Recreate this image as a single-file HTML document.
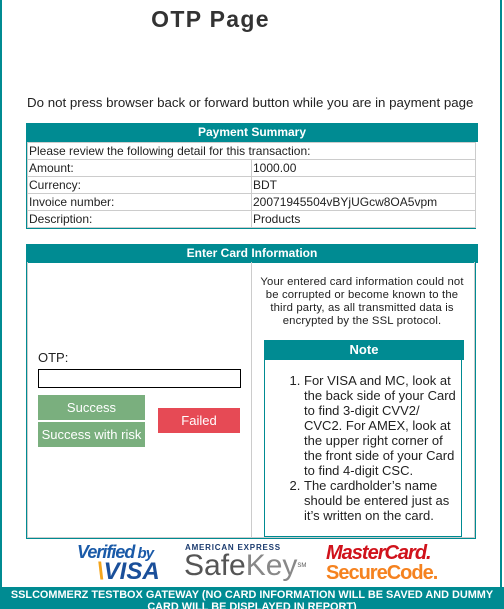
<!DOCTYPE html>
<html><head><style>
*{margin:0;padding:0;box-sizing:border-box}
body{width:504px;height:609px;overflow:hidden;background:#fff;font-family:"Liberation Sans",sans-serif;color:#222;position:relative}
.frame{position:absolute;left:0;top:0;width:502px;height:609px;border-left:2px solid #008b92;border-right:2px solid #008b92}
.abs{position:absolute}
h1{position:absolute;left:0;width:421px;top:6px;text-align:center;font-size:23px;font-weight:bold;color:#333;letter-spacing:1.3px}
.hd{position:absolute;background:#008b92;color:#fff;font-weight:bold;font-size:12px;text-align:center}
table{border-collapse:collapse;position:absolute;left:27px;top:142px;width:449px;font-size:12px}
td{border:1px solid #ccc;height:17px;padding:0 1px;line-height:15px}
.btn{position:absolute;color:#fff;font-size:13px;text-align:center}
</style></head><body>
<div class="frame"></div>
<h1>OTP Page</h1>
<div class="abs" style="left:27px;top:95px;font-size:13.3px">Do not press browser back or forward button while you are in payment page</div>
<div class="hd" style="left:26px;top:123px;width:452px;height:19px;line-height:18px">Payment Summary</div>
<div class="abs" style="left:26px;top:142px;width:450px;height:87px;border:1px solid #008b92"></div>
<table>
<tr><td colspan="2">Please review the following detail for this transaction:</td></tr>
<tr><td style="width:224px">Amount:</td><td>1000.00</td></tr>
<tr><td>Currency:</td><td>BDT</td></tr>
<tr><td>Invoice number:</td><td>20071945504vBYjUGcw8OA5vpm</td></tr>
<tr><td>Description:</td><td>Products</td></tr>
</table>
<div class="hd" style="left:26px;top:244px;width:452px;height:19px;line-height:18px">Enter Card Information</div>
<div class="abs" style="left:26px;top:262px;width:450px;height:277px;border:1px solid #008b92;border-top:none"></div>
<div class="abs" style="left:27px;top:262px;width:448px;height:276px;border:1px solid #ccc;border-top:none"></div>
<div class="abs" style="left:251px;top:262px;width:1px;height:276px;background:#ccc"></div>
<div class="abs" style="left:38px;top:350px;font-size:13px">OTP:</div>
<div class="abs" style="left:38px;top:369px;width:203px;height:19px;border:1px solid #000"></div>
<div class="btn" style="left:38px;top:395px;width:107px;height:25px;line-height:25px;background:#7aaf7e">Success</div>
<div class="btn" style="left:38px;top:422px;width:107px;height:25px;line-height:25px;background:#7aaf7e">Success with risk</div>
<div class="btn" style="left:158px;top:408px;width:82px;height:25px;line-height:25px;background:#e64a55">Failed</div>
<div class="abs" style="left:252px;top:276px;width:220px;text-align:center;font-size:11.3px;letter-spacing:.15px;line-height:13px;white-space:nowrap">Your entered card information could not<br>be corrupted or become known to the<br>third party, as all transmitted data is<br>encrypted by the SSL protocol.</div>
<div class="hd" style="left:264px;top:340px;width:200px;height:20px;line-height:20px;font-size:13px">Note</div>
<div class="abs" style="left:264px;top:359px;width:198px;height:178px;border:1px solid #008b92;border-top:none"></div>
<ol class="abs" style="left:304px;top:373px;width:152px;font-size:13px;line-height:15px;padding-left:0">
<li>For VISA and MC, look at the back side of your Card to find 3-digit CVV2/ CVC2. For AMEX, look at the upper right corner of the front side of your Card to find 4-digit CSC.</li>
<li>The cardholder’s name should be entered just as it’s written on the card.</li>
</ol>
<div class="abs" style="left:77px;top:543px;width:90px;font-style:italic;font-weight:bold;color:#1a5aa8;font-size:18px;letter-spacing:-1px;line-height:18px">Verified<span style="font-size:15px"> by</span></div>
<div class="abs" style="left:97px;top:560px;font-style:italic;font-weight:bold;color:#1a4f9a;font-size:24px;line-height:24px"><span style="color:#f4a51c">\</span>VISA</div>
<div class="abs" style="left:185px;top:543px;font-weight:bold;color:#1a3a6e;font-size:8px;letter-spacing:.8px">AMERICAN EXPRESS</div>
<div class="abs" style="left:184px;top:550px;color:#555;font-size:30px;line-height:32px">Safe<span style="color:#888">Key</span><span style="font-size:6px;vertical-align:top">SM</span></div>
<div class="abs" style="left:326px;top:543px;font-weight:bold;font-style:italic;color:#d0121b;font-size:20px;letter-spacing:-1px;line-height:21px">MasterCard.</div>
<div class="abs" style="left:326px;top:563px;font-weight:bold;color:#f5821f;font-size:20px;letter-spacing:-1px;line-height:21px">SecureCode.</div>
<div class="abs" style="left:0;top:587px;width:504px;height:22px;background:#008b92;color:#fff;font-weight:bold;font-size:10.9px;text-align:center;line-height:12px;padding-top:2px;white-space:nowrap;overflow:hidden">SSLCOMMERZ TESTBOX GATEWAY (NO CARD INFORMATION WILL BE SAVED AND DUMMY<br>CARD WILL BE DISPLAYED IN REPORT)</div>
</body></html>
